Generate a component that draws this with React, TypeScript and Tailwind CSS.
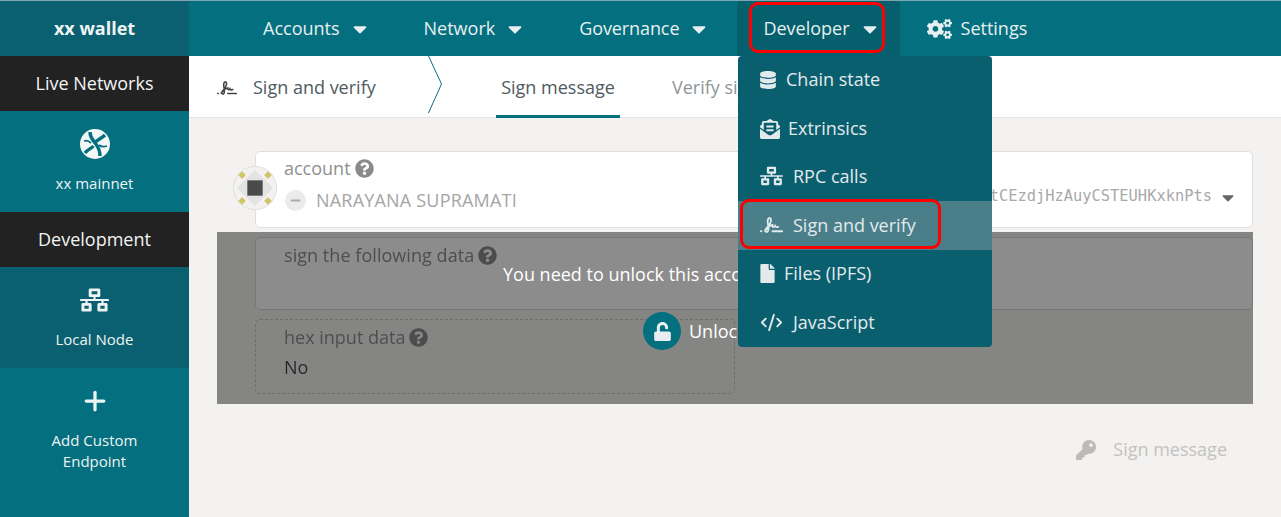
import type { ReactNode } from 'react'
import { CodeXml, Plus } from 'lucide-react'
import {
  FaCaretDown,
  FaCogs,
  FaDatabase,
  FaEnvelopeOpenText,
  FaFile,
  FaKey,
  FaMinus,
  FaNetworkWired,
  FaQuestionCircle,
  FaUnlock,
} from 'react-icons/fa'

function XxLogo() {
  return (
    <svg viewBox="0 0 30 30" className="w-[30px] h-[30px]">
      <circle cx="15" cy="15" r="15" fill="#f4f7f7" />
      <path
        d="M10 3 C10 9 13 11 15.5 14.5 C18 18 20 20 20 27"
        fill="none"
        stroke="#04707f"
        strokeWidth="3.4"
      />
      <path
        d="M25 6 C21 10 18 10 15.5 13 M13.5 17 C11 20 8 20 5 24"
        fill="none"
        stroke="#04707f"
        strokeWidth="3.4"
      />
      <path d="M4 12 C7 11 9 12 11 14 M19 16 C21 18 24 18 27 17" fill="none" stroke="#04707f" strokeWidth="1.8" />
    </svg>
  )
}

function SignatureIcon({ className }: { className: string }) {
  return (
    <svg viewBox="0 0 24 18" className={className} fill="none" stroke="currentColor" strokeWidth="1.9" strokeLinecap="round">
      <path d="M0.8 15.5 H1.4" />
      <path d="M5 15 C8 12.5 12 6 11.5 3.2 C11 0.6 7.8 1.2 8 5.5 C8.2 9 9.6 12.5 8.6 15 C7.8 17 5.2 16.6 5.8 14.2 C6.4 12 10 9.8 13 9 C12.8 11.5 14 11.8 15.6 9.8 C16.2 11.5 17.4 11.6 19 10.8" />
      <path d="M13 15.5 H23.2" />
    </svg>
  )
}

function Identicon() {
  const dots = [
    [10.5, 10.5],
    [37.5, 10.5],
    [10.5, 37.5],
    [37.5, 37.5],
  ]
  return (
    <svg viewBox="0 0 48 48" className="w-[46px] h-[46px]">
      <circle cx="24" cy="24" r="22.5" fill="#f3f2f0" stroke="#dedede" />
      <path d="M24 5 L43 24 L24 43 L5 24 Z" fill="#e3e3e3" />
      <rect x="16" y="16" width="16" height="16" fill="#4a4a4a" />
      {dots.map(([x, y]) => (
        <path key={`${x}-${y}`} d={`M${x} ${y - 4} L${x + 4} ${y} L${x} ${y + 4} L${x - 4} ${y} Z`} fill="#cfc56b" />
      ))}
    </svg>
  )
}

const navItems = [
  { label: 'Accounts', pad: 'pl-[25px] pr-[26px]' },
  { label: 'Network', pad: 'pl-[25px] pr-[26px]' },
  { label: 'Governance', pad: 'pl-[25px] pr-[25px] tracking-[-0.1px]' },
  { label: 'Developer', pad: 'pl-[26px] pr-[23px]', active: true },
]

const menuItems = [
  { label: 'Chain state', icon: <FaDatabase className="w-4 h-[18px]" />, gap: 'gap-[10px] pb-[1px]' },
  { label: 'Extrinsics', icon: <FaEnvelopeOpenText className="w-[20px] h-[20px]" />, gap: 'gap-[8px]' },
  { label: 'RPC calls', icon: <FaNetworkWired className="w-[23px] h-[20px]" />, gap: 'gap-[10px] pb-[1px]' },
  { label: 'Sign and verify', icon: <SignatureIcon className="w-[23px] h-[18px]" />, gap: 'gap-[10px]', active: true },
  { label: 'Files (IPFS)', icon: <FaFile className="w-[15px] h-[19px]" />, gap: 'gap-[9px] pb-[1px]' },
  { label: 'JavaScript', icon: <CodeXml className="w-[23px] h-[23px]" strokeWidth={2} />, gap: 'gap-[10px]' },
]

function SideHeader({ children }: { children: ReactNode }) {
  return <div className="h-[55px] bg-[#222222] flex items-center justify-center text-[18px] text-[#f2f4f4]">{children}</div>
}

function Hint() {
  return <FaQuestionCircle className="w-[19px] h-[19px] text-[#8a8a8a] ml-[4px]" />
}

export default function App() {
  return (
    <div className="relative w-[1281px] h-[517px] overflow-hidden flex bg-[#f3f2f0] font-['Open_Sans','Noto_Sans',sans-serif] text-[#4e4e4e]">
      {/* left rail */}
      <div className="w-[189px] shrink-0 flex flex-col text-[#eef3f4]">
        <div className="h-[56px] bg-[#0a6070] border-t border-[#7fa6ae] flex items-center justify-center text-[18px] font-bold">
          xx wallet
        </div>
        <SideHeader>Live Networks</SideHeader>
        <div className="h-[101px] bg-[#04707f] flex flex-col items-center pt-[18px]">
          <XxLogo />
          <div className="text-[15px] mt-[13px]">xx mainnet</div>
        </div>
        <SideHeader>Development</SideHeader>
        <div className="h-[101px] bg-[#0a6070] flex flex-col items-center pt-[21px]">
          <FaNetworkWired className="w-[29px] h-[24px]" />
          <div className="text-[15px] mt-[16px]">Local Node</div>
        </div>
        <div className="flex-1 bg-[#04707f] flex flex-col items-center pt-[18px]">
          <Plus className="w-[30px] h-[30px]" strokeWidth={2.6} />
          <div className="text-[15px] leading-[21px] mt-[14px] text-center">
            Add Custom
            <br />
            Endpoint
          </div>
        </div>
      </div>

      <div className="flex-1 flex flex-col min-w-0">
        {/* top nav */}
        <div className="h-[56px] bg-[#04707f] border-t border-[#7fa6ae] flex items-stretch pl-[49px] gap-[6px] text-[18px] text-[#e8eff0]">
          {navItems.map((item) => (
            <div
              key={item.label}
              className={`relative flex items-center gap-[13px] ${item.pad} ${item.active ? 'bg-[#055f6d] rounded-t-[4px]' : ''}`}
            >
              <span>{item.label}</span>
              <FaCaretDown className="w-[14px] h-[22px]" />
              {item.active && (
                <div className="absolute left-[12px] right-[15px] top-[1px] h-[51px] border-[3px] border-[#ff0000] rounded-[9px]" />
              )}
            </div>
          ))}
          <div className="flex items-center gap-[9px] pl-[21px]">
            <FaCogs className="w-[25px] h-[20px]" />
            <span>Settings</span>
          </div>
        </div>

        {/* tabs */}
        <div className="h-[62px] bg-white border-b border-[#e6e5e3] flex items-stretch text-[18px]">
          <div className="w-[239px] flex items-center pl-[28px] gap-[16px] pt-[2px]">
            <SignatureIcon className="w-[20px] h-[16px] text-[#444]" />
            <span className="text-[#4e5a60]">Sign and verify</span>
          </div>
          <svg viewBox="0 0 14 57" className="w-[14px] h-[57px]">
            <path d="M0.5 0 L13.5 28 L0.5 57" fill="none" stroke="#04707f" strokeWidth="1" />
          </svg>
          <div className="w-[124px] ml-[54px] flex items-center justify-center border-b-[3px] border-[#04707f] -mb-px text-[#4e5a60] pt-[3px]">
            Sign message
          </div>
          <div className="ml-[52px] flex items-center text-[#8f9599] pt-[1px]">Verify signature</div>
        </div>

        {/* form */}
        <div className="relative mx-[28px] mt-[33px]">
          <div className="relative ml-[38px] h-[77px] bg-white border border-[#dedede] rounded-[5px] pl-[28px] pt-[3px] text-[#a5a5a5]">
            <div className="absolute left-[-24px] top-[13px]">
              <Identicon />
            </div>
            <div className="flex items-center text-[18px] text-[#8f8f8f]">
              account
              <Hint />
            </div>
            <div className="flex items-center mt-[5px] text-[18px] tracking-[0.2px]">
              <span className="w-[21px] h-[21px] rounded-full bg-[#ebebeb] flex items-center justify-center mr-[10px] ml-[1px]">
                <FaMinus className="w-[11px] h-[11px] text-[#aaa]" />
              </span>
              NARAYANA SUPRAMATI
            </div>
            <div className="absolute right-[40px] top-[33px] font-['DejaVu_Sans_Mono',monospace] text-[15.4px] text-[#a9a9a9]">
              tCEzdjHzAuyCSTEUHKxknPts
            </div>
            <FaCaretDown className="absolute right-[18px] top-[36px] w-[12px] h-[19px] text-[#666]" />
          </div>

          <div className="ml-[38px] mt-[9px] h-[73px] bg-white border border-[#d9d9d9] rounded-[5px] pl-[28px] pt-[4px] blur-[0.4px]">
            <div className="flex items-center text-[18px] text-[#8f8f8f] tracking-[0.05px]">
              sign the following data
              <Hint />
            </div>
          </div>

          <div className="ml-[38px] mt-[9px] w-[480px] h-[75px] border border-dashed border-[#c8c8c8] rounded-[5px] pl-[28px] pt-[4px] blur-[0.4px]">
            <div className="flex items-center text-[18px] text-[#8f8f8f]">
              hex input data
              <Hint />
            </div>
            <div className="text-[18px] text-[#4e4e4e] mt-[3px]">No</div>
          </div>
          <div className="h-[11px]" />

          {/* locked overlay */}
          <div className="absolute left-0 right-0 top-[81px] h-[172px] bg-black/45">
            <div className="absolute left-[286px] top-[29px] text-[18px] text-white whitespace-nowrap">
              You need to unlock this account
            </div>
            <div className="absolute left-[426px] top-[80px] flex items-center gap-[8px] text-[18px] text-white">
              <span className="w-[38px] h-[38px] rounded-full bg-[#04707f] flex items-center justify-center">
                <FaUnlock className="w-[19px] h-[19px] text-[#e8eef0]" />
              </span>
              Unlock
            </div>
          </div>
        </div>

        <div className="flex justify-end items-center gap-[17px] mr-[54px] mt-[31px] text-[18px] text-[#c4c2c0]">
          <FaKey className="w-[20px] h-[20px] text-[#bdbbb9]" />
          Sign message
        </div>
      </div>

      {/* developer menu */}
      <div className="absolute left-[738px] top-[56px] w-[254px] h-[291px] bg-[#0a5f6f] rounded-[4px] text-[18px] text-[#e3eaec] flex flex-col">
        {menuItems.map((item) => (
          <div
            key={item.label}
            className={`relative h-[48.4px] flex items-center pl-[22px] ${item.gap} ${item.active ? 'bg-[#4a7f8a]' : ''}`}
          >
            {item.icon}
            <span>{item.label}</span>
            {item.active && (
              <div className="absolute left-[2px] w-[201px] top-[-2px] h-[50px] border-[3px] border-[#ff0000] rounded-[9px]" />
            )}
          </div>
        ))}
      </div>
    </div>
  )
}
